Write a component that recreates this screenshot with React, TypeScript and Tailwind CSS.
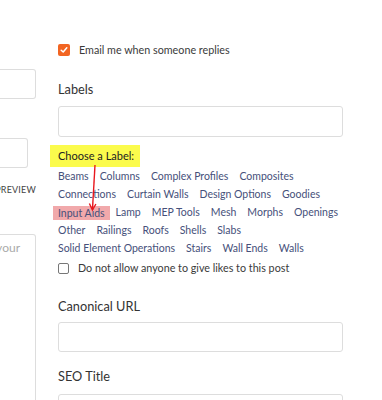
import React from 'react';

const labels: string[][] = [
  ['Beams', 'Columns', 'Complex Profiles', 'Composites'],
  ['Connections', 'Curtain Walls', 'Design Options', 'Goodies'],
  ['Input Aids', 'Lamp', 'MEP Tools', 'Mesh', 'Morphs', 'Openings'],
  ['Other', 'Railings', 'Roofs', 'Shells', 'Slabs'],
  ['Solid Element Operations', 'Stairs', 'Wall Ends', 'Walls'],
];

function Checkbox({ checked }: { checked?: boolean }) {
  if (checked) {
    return (
      <span className="flex h-[12px] w-[12px] shrink-0 items-center justify-center rounded-[2px] bg-[#f26522]">
        <svg width="8" height="8" viewBox="0 0 8 8" fill="none">
          <path d="M1.2 4.2 L3.2 6 L6.8 1.8" stroke="#fff" strokeWidth="1.5" strokeLinecap="round" strokeLinejoin="round" />
        </svg>
      </span>
    );
  }
  return <span className="h-[11px] w-[11px] shrink-0 rounded-[2px] border border-[#777] bg-white" />;
}

export default function App() {
  return (
    <div className="relative h-[400px] w-[382px] overflow-hidden bg-white text-[#333]" style={{ fontFamily: 'Lato, "Liberation Sans", sans-serif' }}>
      <div className="flex">
        {/* left column, cut off by the edge */}
        <div className="w-[36px] shrink-0">
          <div className="mt-[69px] h-[30px] rounded-r-[3px] border border-l-0 border-[#ddd]" />
          <div className="mt-[39px] h-[30px] w-[28px] rounded-r-[3px] border border-l-0 border-[#ddd]" />
          <div className="mt-[16px] flex h-[12px] justify-end overflow-hidden whitespace-nowrap text-[9px] leading-[12px] tracking-[0.2px] text-[#444]">
            PREVIEW
          </div>
          <div className="mt-[38px] h-[200px] rounded-tr-[3px] border border-l-0 border-[#ddd]">
            <div className="flex justify-end overflow-hidden whitespace-nowrap pr-[15px] pt-[4px] text-[12px] text-[#aaa]">
              Tell us your
            </div>
          </div>
        </div>

        {/* main column */}
        <div className="ml-[22px] w-[285px] shrink-0">
          <div className="mt-[44px] flex h-[12px] items-center gap-[9px]">
            <Checkbox checked />
            <span className="whitespace-nowrap text-[10.75px] text-[#3a3a3a]">Email me when someone replies</span>
          </div>

          <div className="mt-[25px] text-[12.75px] leading-[16px] text-[#333]">Labels</div>
          <div className="mt-[9px] h-[31px] rounded-[3px] border border-[#ddd]" />

          <div className="relative mt-[8px]">
            <div className="-ml-[8px] w-fit h-[22px] bg-[#fbfb4c] pl-[8px] pr-[6px] text-[11px] leading-[22px] text-[#222]">
              Choose a Label:
            </div>
            <div className="mt-px">
              {labels.map((row, i) => (
                <div key={i} className="flex h-[18px] items-center gap-[11px] whitespace-nowrap text-[10.5px] text-[#46507a]">
                  {row.map((l) =>
                    l === 'Input Aids' ? (
                      <span key={l} className="-mx-[5px] bg-[#f1a9ab] px-[5px] leading-[14px]">
                        {l}
                      </span>
                    ) : (
                      <span key={l}>{l}</span>
                    ),
                  )}
                </div>
              ))}
            </div>
            <svg className="pointer-events-none absolute left-[29px] top-[18px]" width="14" height="50" viewBox="0 0 14 50" fill="none">
              <path d="M8 2 L5.5 46" stroke="#e8171e" strokeWidth="1.4" />
              <path d="M2.4 40.5 L5.4 47 L8.9 41" stroke="#e8171e" strokeWidth="1.4" fill="none" />
            </svg>
          </div>

          <div className="mt-[4px] flex h-[12px] items-center gap-[9px]">
            <Checkbox />
            <span className="whitespace-nowrap text-[10.75px] text-[#3a3a3a]">Do not allow anyone to give likes to this post</span>
          </div>

          <div className="mt-[24px] text-[12.75px] leading-[16px] text-[#333]">Canonical URL</div>
          <div className="mt-[8px] h-[30px] rounded-[3px] border border-[#ddd]" />

          <div className="mt-[16px] text-[12.75px] leading-[16px] text-[#333]">SEO Title</div>
          <div className="mt-[10px] h-[30px] rounded-[3px] border border-[#ddd]" />
        </div>
      </div>
    </div>
  );
}
